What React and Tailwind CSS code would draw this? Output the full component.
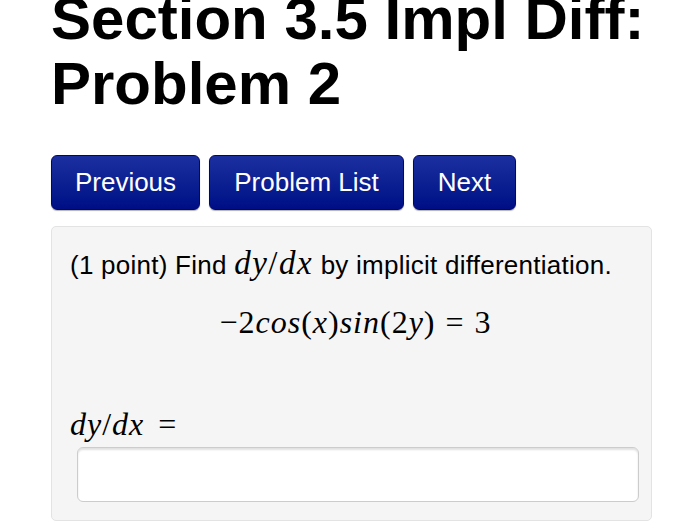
export default function App() {
  const mi = "italic";
  return (
    <div className="w-[700px] h-[530px] overflow-hidden bg-white font-['Liberation_Sans',Arial,sans-serif]">
      <div className="pl-[51px] pr-[40px]">
        <h1 className="mt-[-14px] text-[60px] leading-[65px] font-bold text-black">
          Section 3.5 Impl Diff: Problem 2
        </h1>

        <div className="mt-[39px] flex gap-[9px]">
          <button className="h-[55px] w-[149px] rounded-[6px] text-white text-[26px] bg-gradient-to-b from-[#1c2fa0] to-[#000d85] border border-[#00066a] shadow-[0_1px_1px_rgba(0,0,0,0.3)]">
            Previous
          </button>
          <button className="h-[55px] w-[195px] rounded-[6px] text-white text-[26px] bg-gradient-to-b from-[#1c2fa0] to-[#000d85] border border-[#00066a] shadow-[0_1px_1px_rgba(0,0,0,0.3)]">
            Problem List
          </button>
          <button className="h-[55px] w-[103px] rounded-[6px] text-white text-[26px] bg-gradient-to-b from-[#1c2fa0] to-[#000d85] border border-[#00066a] shadow-[0_1px_1px_rgba(0,0,0,0.3)]">
            Next
          </button>
        </div>

        <div className="mt-[16px] w-[601px] h-[295px] bg-[#f5f5f5] border border-[#e3e3e3] rounded-[5px] pt-[19px] pl-[18px] pr-[10px]">
          <p className="text-[26px] leading-[34px] tracking-[0.25px] text-black whitespace-nowrap">
            (1 point) Find{" "}
            <span className="font-['Liberation_Serif',serif] text-[33px] tracking-[1.5px]">
              <span className="italic">dy</span>/<span className="italic">dx</span>
            </span>{" "}
            by implicit differentiation.
          </p>

          <div className="mt-[20px] text-center font-['Liberation_Serif',serif] text-[32px] leading-[40px] tracking-[1px] text-black">
            <span>−2</span>
            <span className={mi}>cos</span>
            <span>(</span>
            <span className={mi}>x</span>
            <span>)</span>
            <span className={mi}>sin</span>
            <span>(2</span>
            <span className={mi}>y</span>
            <span>)</span>
            <span className="mx-[10px]">=</span>
            <span>3</span>
          </div>

          <div className="mt-[62px] font-['Liberation_Serif',serif] text-[32px] leading-[40px] tracking-[1px] text-black">
            <span className="italic">dy</span>
            <span>/</span>
            <span className="italic">dx</span>
            <span className="ml-[14px]">=</span>
          </div>

          <input
            type="text"
            className="mt-[3px] ml-[7px] block w-[562px] h-[55px] bg-white border border-[#cccccc] rounded-[6px] shadow-[inset_0_2px_2px_rgba(0,0,0,0.12)] outline-none"
          />
        </div>
      </div>
    </div>
  );
}
